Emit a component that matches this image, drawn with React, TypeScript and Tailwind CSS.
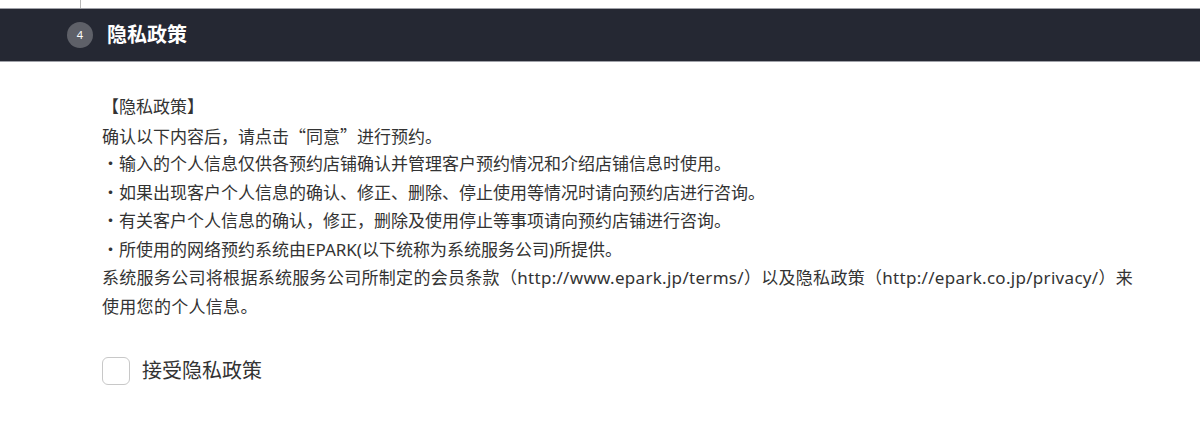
export default function App() {
  const lines = [
    "【隐私政策】",
    "确认以下内容后，请点击“同意”进行预约。",
    "・输入的个人信息仅供各预约店铺确认并管理客户预约情况和介绍店铺信息时使用。",
    "・如果出现客户个人信息的确认、修正、删除、停止使用等情况时请向预约店进行咨询。",
    "・有关客户个人信息的确认，修正，删除及使用停止等事项请向预约店铺进行咨询。",
    "・所使用的网络预约系统由EPARK(以下统称为系统服务公司)所提供。",
  ];

  return (
    <div
      className="min-h-screen bg-white text-[#333]"
      style={{ fontFamily: '"Noto Sans", "Noto Sans CJK SC", sans-serif' }}
    >
      <div className="h-2 ml-20 w-px bg-[#b8b8b8]" />
      <div className="h-[54px] bg-[#252833] border-y border-[#9fa1a8] flex items-center">
        <div className="ml-[67px] w-[26px] h-[26px] rounded-full bg-[#5e6068] text-white text-[11px] flex items-center justify-center">
          4
        </div>
        <h2 className="ml-[14px] text-white text-[20px] font-bold">隐私政策</h2>
      </div>

      <div className="pl-[102px] pr-[64px] pt-[31px] text-[17px] leading-[28.5px]">
        {lines.map((l, i) => (
          <p key={i} className={i === 1 ? "font-['Noto_Sans_CJK_SC',sans-serif]" : ""}>
            {l}
          </p>
        ))}
        <p className="tracking-[0.3px]">
          系统服务公司将根据系统服务公司所制定的会员条款（http://www.epark.jp/terms/）以及隐私政策（http://epark.co.jp/privacy/）来使用您的个人信息。
        </p>
      </div>

      <label className="flex items-center ml-[102px] mt-[35px] gap-3">
        <span className="w-[28px] h-[28px] rounded-md border border-[#c8c8c8] bg-white" />
        <span className="text-[20px] text-[#333]">接受隐私政策</span>
      </label>
    </div>
  );
}
